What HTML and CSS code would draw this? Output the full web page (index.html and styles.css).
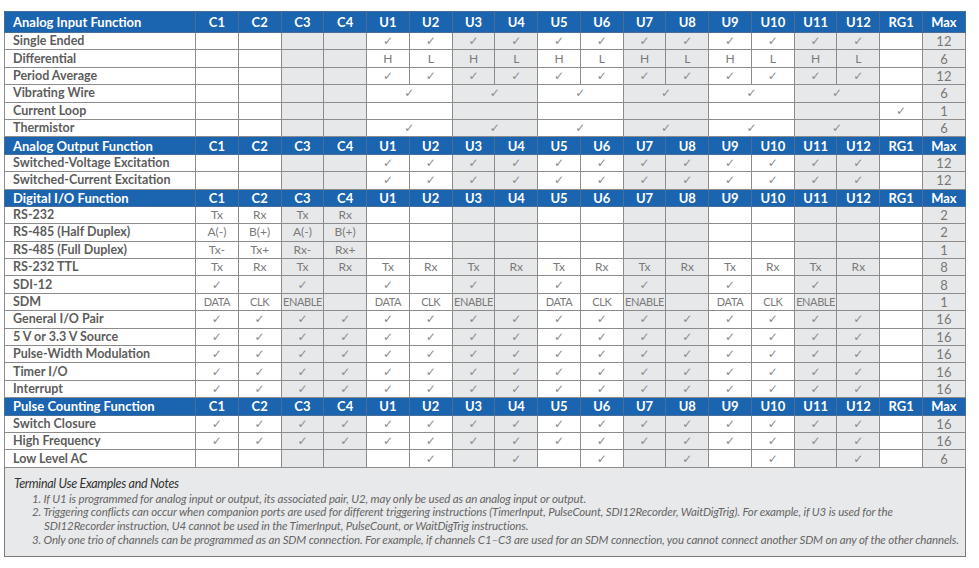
FILE: index.html
```html
<!DOCTYPE html>
<html>
<head>
<meta charset="utf-8">
<link rel="stylesheet" href="styles.css">
</head>
<body>
<div class="page">
<table class="grid">
<colgroup>
<col class="c-label"><col><col><col class="sh"><col class="sh"><col><col><col class="sh"><col class="sh"><col><col><col class="sh"><col class="sh"><col><col><col class="sh"><col class="sh"><col><col class="sh">
</colgroup>
<tbody>
<tr class="hd first"><th class="lab">Analog Input Function</th><th>C1</th><th>C2</th><th>C3</th><th>C4</th><th>U1</th><th>U2</th><th>U3</th><th>U4</th><th>U5</th><th>U6</th><th>U7</th><th>U8</th><th>U9</th><th>U10</th><th>U11</th><th>U12</th><th>RG1</th><th>Max</th></tr>
<tr><td class="lab">Single Ended</td><td></td><td></td><td></td><td></td><td class="ck">✓</td><td class="ck">✓</td><td class="ck">✓</td><td class="ck">✓</td><td class="ck">✓</td><td class="ck">✓</td><td class="ck">✓</td><td class="ck">✓</td><td class="ck">✓</td><td class="ck">✓</td><td class="ck">✓</td><td class="ck">✓</td><td></td><td class="mx">12</td></tr>
<tr><td class="lab">Differential</td><td></td><td></td><td></td><td></td><td>H</td><td>L</td><td>H</td><td>L</td><td>H</td><td>L</td><td>H</td><td>L</td><td>H</td><td>L</td><td>H</td><td>L</td><td></td><td class="mx">6</td></tr>
<tr><td class="lab">Period Average</td><td></td><td></td><td></td><td></td><td class="ck">✓</td><td class="ck">✓</td><td class="ck">✓</td><td class="ck">✓</td><td class="ck">✓</td><td class="ck">✓</td><td class="ck">✓</td><td class="ck">✓</td><td class="ck">✓</td><td class="ck">✓</td><td class="ck">✓</td><td class="ck">✓</td><td></td><td class="mx">12</td></tr>
<tr><td class="lab">Vibrating Wire</td><td></td><td></td><td></td><td></td><td colspan="2" class="ck">✓</td><td colspan="2" class="ck">✓</td><td colspan="2" class="ck">✓</td><td colspan="2" class="ck">✓</td><td colspan="2" class="ck">✓</td><td colspan="2" class="ck">✓</td><td></td><td class="mx">6</td></tr>
<tr><td class="lab">Current Loop</td><td></td><td></td><td></td><td></td><td colspan="2"></td><td colspan="2"></td><td colspan="2"></td><td colspan="2"></td><td colspan="2"></td><td colspan="2"></td><td class="ck">✓</td><td class="mx">1</td></tr>
<tr><td class="lab">Thermistor</td><td></td><td></td><td></td><td></td><td colspan="2" class="ck">✓</td><td colspan="2" class="ck">✓</td><td colspan="2" class="ck">✓</td><td colspan="2" class="ck">✓</td><td colspan="2" class="ck">✓</td><td colspan="2" class="ck">✓</td><td></td><td class="mx">6</td></tr>

<tr class="hd"><th class="lab">Analog Output Function</th><th>C1</th><th>C2</th><th>C3</th><th>C4</th><th>U1</th><th>U2</th><th>U3</th><th>U4</th><th>U5</th><th>U6</th><th>U7</th><th>U8</th><th>U9</th><th>U10</th><th>U11</th><th>U12</th><th>RG1</th><th>Max</th></tr>
<tr><td class="lab">Switched-Voltage Excitation</td><td></td><td></td><td></td><td></td><td class="ck">✓</td><td class="ck">✓</td><td class="ck">✓</td><td class="ck">✓</td><td class="ck">✓</td><td class="ck">✓</td><td class="ck">✓</td><td class="ck">✓</td><td class="ck">✓</td><td class="ck">✓</td><td class="ck">✓</td><td class="ck">✓</td><td></td><td class="mx">12</td></tr>
<tr><td class="lab">Switched-Current Excitation</td><td></td><td></td><td></td><td></td><td class="ck">✓</td><td class="ck">✓</td><td class="ck">✓</td><td class="ck">✓</td><td class="ck">✓</td><td class="ck">✓</td><td class="ck">✓</td><td class="ck">✓</td><td class="ck">✓</td><td class="ck">✓</td><td class="ck">✓</td><td class="ck">✓</td><td></td><td class="mx">12</td></tr>

<tr class="hd"><th class="lab">Digital I/O Function</th><th>C1</th><th>C2</th><th>C3</th><th>C4</th><th>U1</th><th>U2</th><th>U3</th><th>U4</th><th>U5</th><th>U6</th><th>U7</th><th>U8</th><th>U9</th><th>U10</th><th>U11</th><th>U12</th><th>RG1</th><th>Max</th></tr>
<tr><td class="lab">RS-232</td><td>Tx</td><td>Rx</td><td>Tx</td><td>Rx</td><td></td><td></td><td></td><td></td><td></td><td></td><td></td><td></td><td></td><td></td><td></td><td></td><td></td><td class="mx">2</td></tr>
<tr><td class="lab">RS-485 (Half Duplex)</td><td>A(-)</td><td>B(+)</td><td>A(-)</td><td>B(+)</td><td></td><td></td><td></td><td></td><td></td><td></td><td></td><td></td><td></td><td></td><td></td><td></td><td></td><td class="mx">2</td></tr>
<tr><td class="lab">RS-485 (Full Duplex)</td><td>Tx-</td><td>Tx+</td><td>Rx-</td><td>Rx+</td><td></td><td></td><td></td><td></td><td></td><td></td><td></td><td></td><td></td><td></td><td></td><td></td><td></td><td class="mx">1</td></tr>
<tr><td class="lab">RS-232 TTL</td><td>Tx</td><td>Rx</td><td>Tx</td><td>Rx</td><td>Tx</td><td>Rx</td><td>Tx</td><td>Rx</td><td>Tx</td><td>Rx</td><td>Tx</td><td>Rx</td><td>Tx</td><td>Rx</td><td>Tx</td><td>Rx</td><td></td><td class="mx">8</td></tr>
<tr><td class="lab">SDI-12</td><td class="ck">✓</td><td></td><td class="ck">✓</td><td></td><td class="ck">✓</td><td></td><td class="ck">✓</td><td></td><td class="ck">✓</td><td></td><td class="ck">✓</td><td></td><td class="ck">✓</td><td></td><td class="ck">✓</td><td></td><td></td><td class="mx">8</td></tr>
<tr><td class="lab">SDM</td><td class="sm">DATA</td><td class="sm">CLK</td><td class="sm">ENABLE</td><td></td><td class="sm">DATA</td><td class="sm">CLK</td><td class="sm">ENABLE</td><td></td><td class="sm">DATA</td><td class="sm">CLK</td><td class="sm">ENABLE</td><td></td><td class="sm">DATA</td><td class="sm">CLK</td><td class="sm">ENABLE</td><td></td><td></td><td class="mx">1</td></tr>
<tr><td class="lab">General I/O Pair</td><td class="ck">✓</td><td class="ck">✓</td><td class="ck">✓</td><td class="ck">✓</td><td class="ck">✓</td><td class="ck">✓</td><td class="ck">✓</td><td class="ck">✓</td><td class="ck">✓</td><td class="ck">✓</td><td class="ck">✓</td><td class="ck">✓</td><td class="ck">✓</td><td class="ck">✓</td><td class="ck">✓</td><td class="ck">✓</td><td></td><td class="mx">16</td></tr>
<tr><td class="lab">5 V or 3.3 V Source</td><td class="ck">✓</td><td class="ck">✓</td><td class="ck">✓</td><td class="ck">✓</td><td class="ck">✓</td><td class="ck">✓</td><td class="ck">✓</td><td class="ck">✓</td><td class="ck">✓</td><td class="ck">✓</td><td class="ck">✓</td><td class="ck">✓</td><td class="ck">✓</td><td class="ck">✓</td><td class="ck">✓</td><td class="ck">✓</td><td></td><td class="mx">16</td></tr>
<tr><td class="lab">Pulse-Width Modulation</td><td class="ck">✓</td><td class="ck">✓</td><td class="ck">✓</td><td class="ck">✓</td><td class="ck">✓</td><td class="ck">✓</td><td class="ck">✓</td><td class="ck">✓</td><td class="ck">✓</td><td class="ck">✓</td><td class="ck">✓</td><td class="ck">✓</td><td class="ck">✓</td><td class="ck">✓</td><td class="ck">✓</td><td class="ck">✓</td><td></td><td class="mx">16</td></tr>
<tr><td class="lab">Timer I/O</td><td class="ck">✓</td><td class="ck">✓</td><td class="ck">✓</td><td class="ck">✓</td><td class="ck">✓</td><td class="ck">✓</td><td class="ck">✓</td><td class="ck">✓</td><td class="ck">✓</td><td class="ck">✓</td><td class="ck">✓</td><td class="ck">✓</td><td class="ck">✓</td><td class="ck">✓</td><td class="ck">✓</td><td class="ck">✓</td><td></td><td class="mx">16</td></tr>
<tr><td class="lab">Interrupt</td><td class="ck">✓</td><td class="ck">✓</td><td class="ck">✓</td><td class="ck">✓</td><td class="ck">✓</td><td class="ck">✓</td><td class="ck">✓</td><td class="ck">✓</td><td class="ck">✓</td><td class="ck">✓</td><td class="ck">✓</td><td class="ck">✓</td><td class="ck">✓</td><td class="ck">✓</td><td class="ck">✓</td><td class="ck">✓</td><td></td><td class="mx">16</td></tr>

<tr class="hd"><th class="lab">Pulse Counting Function</th><th>C1</th><th>C2</th><th>C3</th><th>C4</th><th>U1</th><th>U2</th><th>U3</th><th>U4</th><th>U5</th><th>U6</th><th>U7</th><th>U8</th><th>U9</th><th>U10</th><th>U11</th><th>U12</th><th>RG1</th><th>Max</th></tr>
<tr><td class="lab">Switch Closure</td><td class="ck">✓</td><td class="ck">✓</td><td class="ck">✓</td><td class="ck">✓</td><td class="ck">✓</td><td class="ck">✓</td><td class="ck">✓</td><td class="ck">✓</td><td class="ck">✓</td><td class="ck">✓</td><td class="ck">✓</td><td class="ck">✓</td><td class="ck">✓</td><td class="ck">✓</td><td class="ck">✓</td><td class="ck">✓</td><td></td><td class="mx">16</td></tr>
<tr><td class="lab">High Frequency</td><td class="ck">✓</td><td class="ck">✓</td><td class="ck">✓</td><td class="ck">✓</td><td class="ck">✓</td><td class="ck">✓</td><td class="ck">✓</td><td class="ck">✓</td><td class="ck">✓</td><td class="ck">✓</td><td class="ck">✓</td><td class="ck">✓</td><td class="ck">✓</td><td class="ck">✓</td><td class="ck">✓</td><td class="ck">✓</td><td></td><td class="mx">16</td></tr>
<tr><td class="lab">Low Level AC</td><td></td><td></td><td></td><td></td><td></td><td class="ck">✓</td><td></td><td class="ck">✓</td><td></td><td class="ck">✓</td><td></td><td class="ck">✓</td><td></td><td class="ck">✓</td><td></td><td class="ck">✓</td><td></td><td class="mx">6</td></tr>
</tbody>
</table>
<div class="notes">
<div class="notes-title">Terminal Use Examples and Notes</div>
<ol class="notes-list">
<li>1. If U1 is programmed for analog input or output, its associated pair, U2, may only be used as an analog input or output.</li>
<li>2. Triggering conflicts can occur when companion ports are used for different triggering instructions (TimerInput, PulseCount, SDI12Recorder, WaitDigTrig). For example, if U3 is used for the<br><span class="cont">SDI12Recorder instruction, U4 cannot be used in the TimerInput, PulseCount, or WaitDigTrig instructions.</span></li>
<li>3. Only one trio of channels can be programmed as an SDM connection. For example, if channels C1–C3 are used for an SDM connection, you cannot connect another SDM on any of the other channels.</li>
</ol>
</div>
</div>
</body>
</html>
```

FILE: styles.css
```css
html, body {
  margin: 0;
  padding: 0;
  background: #ffffff;
}

.page {
  padding: 11px 0 0 4px;
  width: 962px;
  font-family: Lato, "Noto Sans", sans-serif;
}

.grid {
  width: 961px;
  table-layout: fixed;
  border-collapse: collapse;
  border: 1px solid #6e6e6e;
}

.grid col { width: 42.78px; }
.grid col.c-label { width: 191px; }
.grid col.sh { background: #e7e8e9; }

.grid tr { height: 17.4px; }
.grid tr.first { height: 21px; }

.grid td, .grid th {
  padding: 0;
  border: 1px solid #8c8c8c;
  text-align: center;
  vertical-align: middle;
  white-space: nowrap;
  overflow: hidden;
  line-height: 14px;
}

.grid td {
  color: #7a7a7a;
  font-size: 12px;
}

.grid .hd th {
  background: #1b64b0;
  color: #ffffff;
  font-weight: 700;
  font-size: 13px;
  border-color: #4a6f96;
}

.grid .lab {
  text-align: left;
  padding-left: 8px;
}

.grid td.lab {
  color: #5d5d5d;
  font-weight: 700;
  font-size: 12.5px;
  background: #ffffff;
}

.grid td.ck {
  font-family: "DejaVu Sans", sans-serif;
  font-size: 12px;
  color: #8a8a8a;
}

.grid td.sm {
  font-size: 11px;
  letter-spacing: -0.4px;
}

.grid td.mx {
  font-size: 13px;
  color: #777777;
}

.notes {
  width: 960px;
  background: #e8e9ea;
  border: 1px solid #7a7a7a;
  border-top: none;
  padding: 8px 0 9px 0;
  font-style: italic;
}

.notes-title {
  padding-left: 9px;
  font-size: 12.5px;
  line-height: 15px;
  color: #333333;
  letter-spacing: -0.3px;
}

.notes-list {
  list-style: none;
  margin: 1px 0 0 0;
  padding: 0 0 0 27px;
  font-size: 11.5px;
  line-height: 13.7px;
  color: #666666;
  letter-spacing: -0.15px;
}

.notes-list .cont {
  padding-left: 12px;
}
```
